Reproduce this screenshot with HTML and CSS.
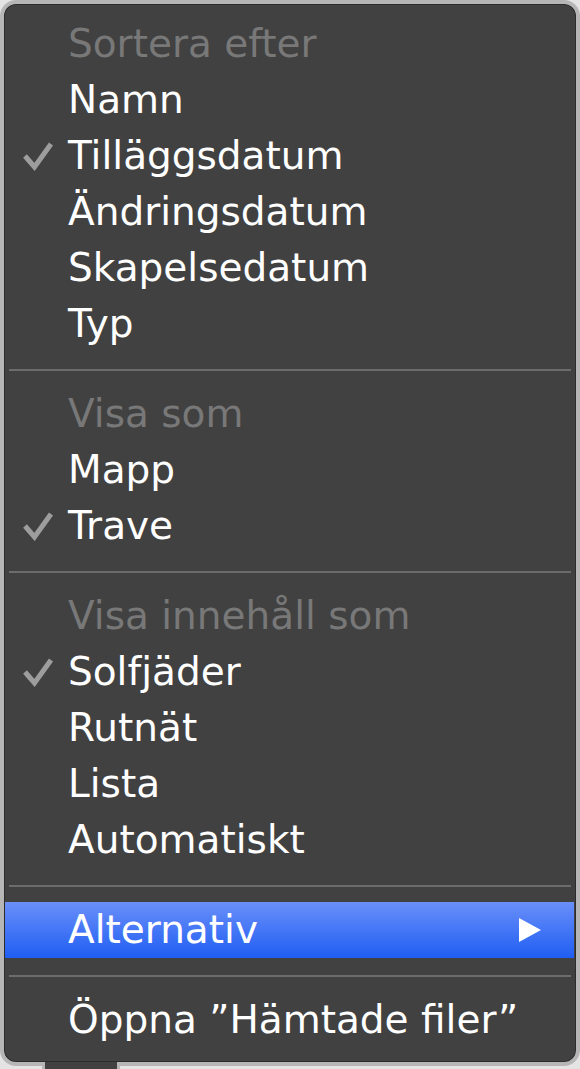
FILE: index.html
```html
<!DOCTYPE html>
<html lang="sv">
<head>
<meta charset="utf-8">
<title>Meny</title>
<link rel="stylesheet" href="styles.css">
</head>
<body>
<div class="menu">
  <div class="row header"><span class="check"></span><span class="label">Sortera efter</span></div>
  <div class="row"><span class="check"></span><span class="label">Namn</span></div>
  <div class="row"><span class="check"><svg viewBox="0 0 32 30" width="32" height="30"><path d="M3 15 L12.5 26 L29 3" fill="none" stroke="#9d9d9d" stroke-width="5"/></svg></span><span class="label">Tilläggsdatum</span></div>
  <div class="row"><span class="check"></span><span class="label">Ändringsdatum</span></div>
  <div class="row"><span class="check"></span><span class="label">Skapelsedatum</span></div>
  <div class="row"><span class="check"></span><span class="label">Typ</span></div>
  <div class="sep"></div>
  <div class="row header"><span class="check"></span><span class="label">Visa som</span></div>
  <div class="row"><span class="check"></span><span class="label">Mapp</span></div>
  <div class="row"><span class="check"><svg viewBox="0 0 32 30" width="32" height="30"><path d="M3 15 L12.5 26 L29 3" fill="none" stroke="#9d9d9d" stroke-width="5"/></svg></span><span class="label">Trave</span></div>
  <div class="sep"></div>
  <div class="row header"><span class="check"></span><span class="label">Visa innehåll som</span></div>
  <div class="row"><span class="check"><svg viewBox="0 0 32 30" width="32" height="30"><path d="M3 15 L12.5 26 L29 3" fill="none" stroke="#9d9d9d" stroke-width="5"/></svg></span><span class="label">Solfjäder</span></div>
  <div class="row"><span class="check"></span><span class="label">Rutnät</span></div>
  <div class="row"><span class="check"></span><span class="label">Lista</span></div>
  <div class="row"><span class="check"></span><span class="label">Automatiskt</span></div>
  <div class="sep"></div>
  <div class="row selected"><span class="check"></span><span class="label">Alternativ</span><svg class="arrow" viewBox="0 0 22 24" width="22" height="24"><path d="M0 0 L22 12 L0 24 Z" fill="#ffffff"/></svg></div>
  <div class="sep"></div>
  <div class="row"><span class="check"></span><span class="label">Öppna ”Hämtade filer”</span></div>
  <div class="tail"></div>
</div>
</body>
</html>
```
FILE: styles.css
```css
html, body {
  margin: 0;
  padding: 0;
}
body {
  background: #e4e4e4;
  width: 580px;
  height: 1069px;
  overflow: hidden;
  font-family: "DejaVu Sans", "Noto Sans", sans-serif;
}
.menu {
  position: relative;
  box-sizing: border-box;
  width: 580px;
  background: #414141;
  border: 4px solid #b6b6b6;
  border-radius: 16px;
  box-shadow: inset 0 0 0 1px #2c2c2c;
  padding: 12px 0 14px 0;
}
.row {
  display: flex;
  align-items: center;
  height: 56px;
  font-size: 39px;
  color: #ffffff;
  white-space: nowrap;
}
.row.header {
  color: #787878;
}
.check {
  box-sizing: border-box;
  width: 64px;
  padding-left: 18px;
  display: flex;
  align-items: center;
  flex: none;
}
.check svg {
  display: block;
}
.label {
  line-height: 56px;
}
.row.selected {
  margin: 0 2px 0 1px;
  background: linear-gradient(#6a8ff9, #1f5ef3);
}
.row.selected .check {
  width: 63px;
}
.arrow {
  margin-left: auto;
  margin-right: 33px;
  display: block;
}
.sep {
  height: 34px;
  display: flex;
  align-items: center;
  padding: 0 5px;
}
.sep::before {
  content: "";
  display: block;
  flex: 1;
  height: 2px;
  margin-top: 1px;
  background: #6c6c6c;
}
.tail {
  position: absolute;
  left: 38px;
  bottom: -10px;
  width: 78px;
  height: 10px;
  background: #414141;
  border-left: 3px solid #b6b6b6;
  border-right: 3px solid #b6b6b6;
  box-sizing: border-box;
}
```
